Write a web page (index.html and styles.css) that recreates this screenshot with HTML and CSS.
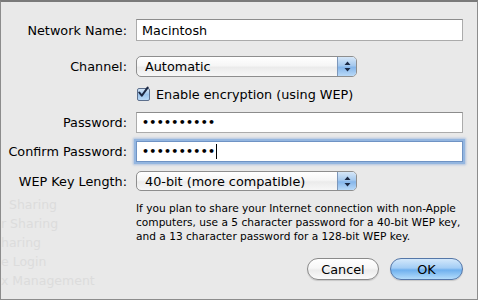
FILE: index.html
```html
<!DOCTYPE html>
<html lang="en">
<head>
    <meta charset="UTF-8">
    <title>Network Settings</title>
    <link rel="stylesheet" href="styles.css">
</head>
<body>
    <div class="sheet">
        <!-- Network name -->
        <div class="row row-name">
            <label class="label">Network Name:</label>
            <div class="field">Macintosh</div>
        </div>

        <!-- Channel popup -->
        <div class="row row-channel">
            <label class="label">Channel:</label>
            <div class="popup">
                <span class="popup-text">Automatic</span>
                <span class="popup-arrows">
                    <svg width="7" height="11" viewBox="0 0 7 11"><path d="M3.5 0.5 L6.5 4 L0.5 4 Z M0.5 7 L6.5 7 L3.5 10.5 Z" fill="#1c2a45"/></svg>
                </span>
            </div>
        </div>

        <!-- Encryption checkbox -->
        <div class="row row-check">
            <span class="label"></span>
            <span class="checkbox">
                <svg width="13" height="13" viewBox="0 0 13 13"><path d="M2.5 6.5 L5.2 10 L11.5 1.2" fill="none" stroke="#1b2742" stroke-width="2.2" stroke-linecap="round" stroke-linejoin="round"/></svg>
            </span>
            <span class="check-text">Enable encryption (using WEP)</span>
        </div>

        <!-- Passwords -->
        <div class="row row-pass">
            <label class="label">Password:</label>
            <div class="field dots">••••••••••</div>
        </div>

        <div class="row row-confirm">
            <label class="label">Confirm Password:</label>
            <div class="field dots focused">••••••••••<span class="caret"></span></div>
        </div>

        <!-- Key length popup -->
        <div class="row row-key">
            <label class="label">WEP Key Length:</label>
            <div class="popup">
                <span class="popup-text">40-bit (more compatible)</span>
                <span class="popup-arrows">
                    <svg width="7" height="11" viewBox="0 0 7 11"><path d="M3.5 0.5 L6.5 4 L0.5 4 Z M0.5 7 L6.5 7 L3.5 10.5 Z" fill="#1c2a45"/></svg>
                </span>
            </div>
        </div>

        <div class="lower">
            <!-- window behind the sheet, showing through -->
            <ul class="ghost">
                <li>Sharing</li>
                <li>r Sharing</li>
                <li>haring</li>
                <li>e Login</li>
                <li>x Management</li>
            </ul>

            <div class="lower-main">
                <p class="help">If you plan to share your Internet connection with non-Apple computers, use a 5 character password for a 40-bit WEP key, and a 13 character password for a 128-bit WEP key.</p>

                <div class="buttons">
                    <button class="btn">Cancel</button>
                    <button class="btn btn-default">OK</button>
                </div>
            </div>
        </div>
    </div>
</body>
</html>
```

FILE: styles.css
```css
* {
    box-sizing: border-box;
    margin: 0;
    padding: 0;
}

body {
    font-family: "DejaVu Sans", sans-serif;
    font-size: 12.8px;
    color: #000;
    background-color: #e9e9e9;
}

.sheet {
    width: 478px;
    height: 300px;
    border: 1px solid #8c8c8c;
    border-top: 2px solid #7a7a7a;
    background-color: #e9e9e9;
    padding: 17px 14px 0 0;
    overflow: hidden;
}

/* Form rows */
.row {
    display: flex;
    align-items: center;
}

.label {
    width: 126px;
    margin-right: 9px;
    text-align: right;
    flex-shrink: 0;
}

.row-channel { margin-top: 15px; }
.row-check   { margin-top: 9px; height: 16px; }
.row-pass    { margin-top: 10px; }
.row-confirm { margin-top: 8px; }
.row-key     { margin-top: 9px; }

/* Text fields */
.field {
    flex: 1;
    height: 22px;
    background-color: #fff;
    border: 1px solid #ababab;
    border-top-color: #8c8c8c;
    padding: 0 5px;
    display: flex;
    align-items: center;
}

.row-pass .field,
.row-confirm .field {
    height: 21px;
}

.dots {
    font-size: 11px;
    font-weight: bold;
    letter-spacing: 0.3px;
}

.focused {
    border-color: #6f93c4;
    box-shadow: 0 0 0 2px #94b6e0, 0 0 2px 3px rgba(120, 160, 215, 0.5);
}

.caret {
    display: inline-block;
    width: 1px;
    height: 15px;
    background-color: #000;
    margin-left: 1px;
}

/* Popup buttons */
.popup {
    width: 221px;
    height: 21px;
    border: 1px solid #8e8e8e;
    border-radius: 5px;
    background: linear-gradient(#ffffff, #f6f6f6 45%, #ebebeb 55%, #f7f7f7);
    display: flex;
    overflow: hidden;
}

.row-key .popup {
    height: 20px;
}

.popup-text {
    flex: 1;
    padding-left: 8px;
    display: flex;
    align-items: center;
}

.popup-arrows {
    width: 19px;
    border-left: 1px solid #7d97ba;
    background: linear-gradient(#d6e7f8, #a5c9ee 45%, #86b6ea 55%, #b9d9f7);
    display: flex;
    align-items: center;
    justify-content: center;
}

/* Checkbox */
.checkbox {
    width: 13px;
    height: 13px;
    margin-left: 1px;
    margin-right: 6px;
    border: 1px solid #5d6f8c;
    border-radius: 2px;
    background: linear-gradient(#d3e5f7, #9cc4ec 50%, #b8d8f6);
    display: flex;
}

.checkbox svg {
    margin: -3px 0 0 -1px;
}

/* Lower area */
.lower {
    display: flex;
    margin-top: 10px;
}

.ghost {
    list-style: none;
    width: 135px;
    flex-shrink: 0;
    color: #dcdcdc;
    font-size: 12.5px;
    line-height: 19px;
    margin-top: -6px;
}

.ghost li:first-child {
    padding-left: 8px;
}

.lower-main {
    flex: 1;
}

.help {
    font-size: 10.6px;
    line-height: 14px;
}

.buttons {
    display: flex;
    justify-content: flex-end;
    gap: 11px;
    margin-top: 15px;
}

.btn {
    font-family: "DejaVu Sans", sans-serif;
    font-size: 12.8px;
    color: #000;
    height: 22px;
    width: 72px;
    border: 1px solid #8a8a8a;
    border-radius: 11px;
    background: linear-gradient(#ffffff, #f7f7f7 45%, #ececec 55%, #fafafa);
    box-shadow: 0 1px 1px rgba(0, 0, 0, 0.15);
}

.btn-default {
    width: 73px;
    border-color: #5577a8;
    background: linear-gradient(#d3e8fb, #a3cdf5 45%, #6fb0ee 55%, #b3dcfb);
}
```
